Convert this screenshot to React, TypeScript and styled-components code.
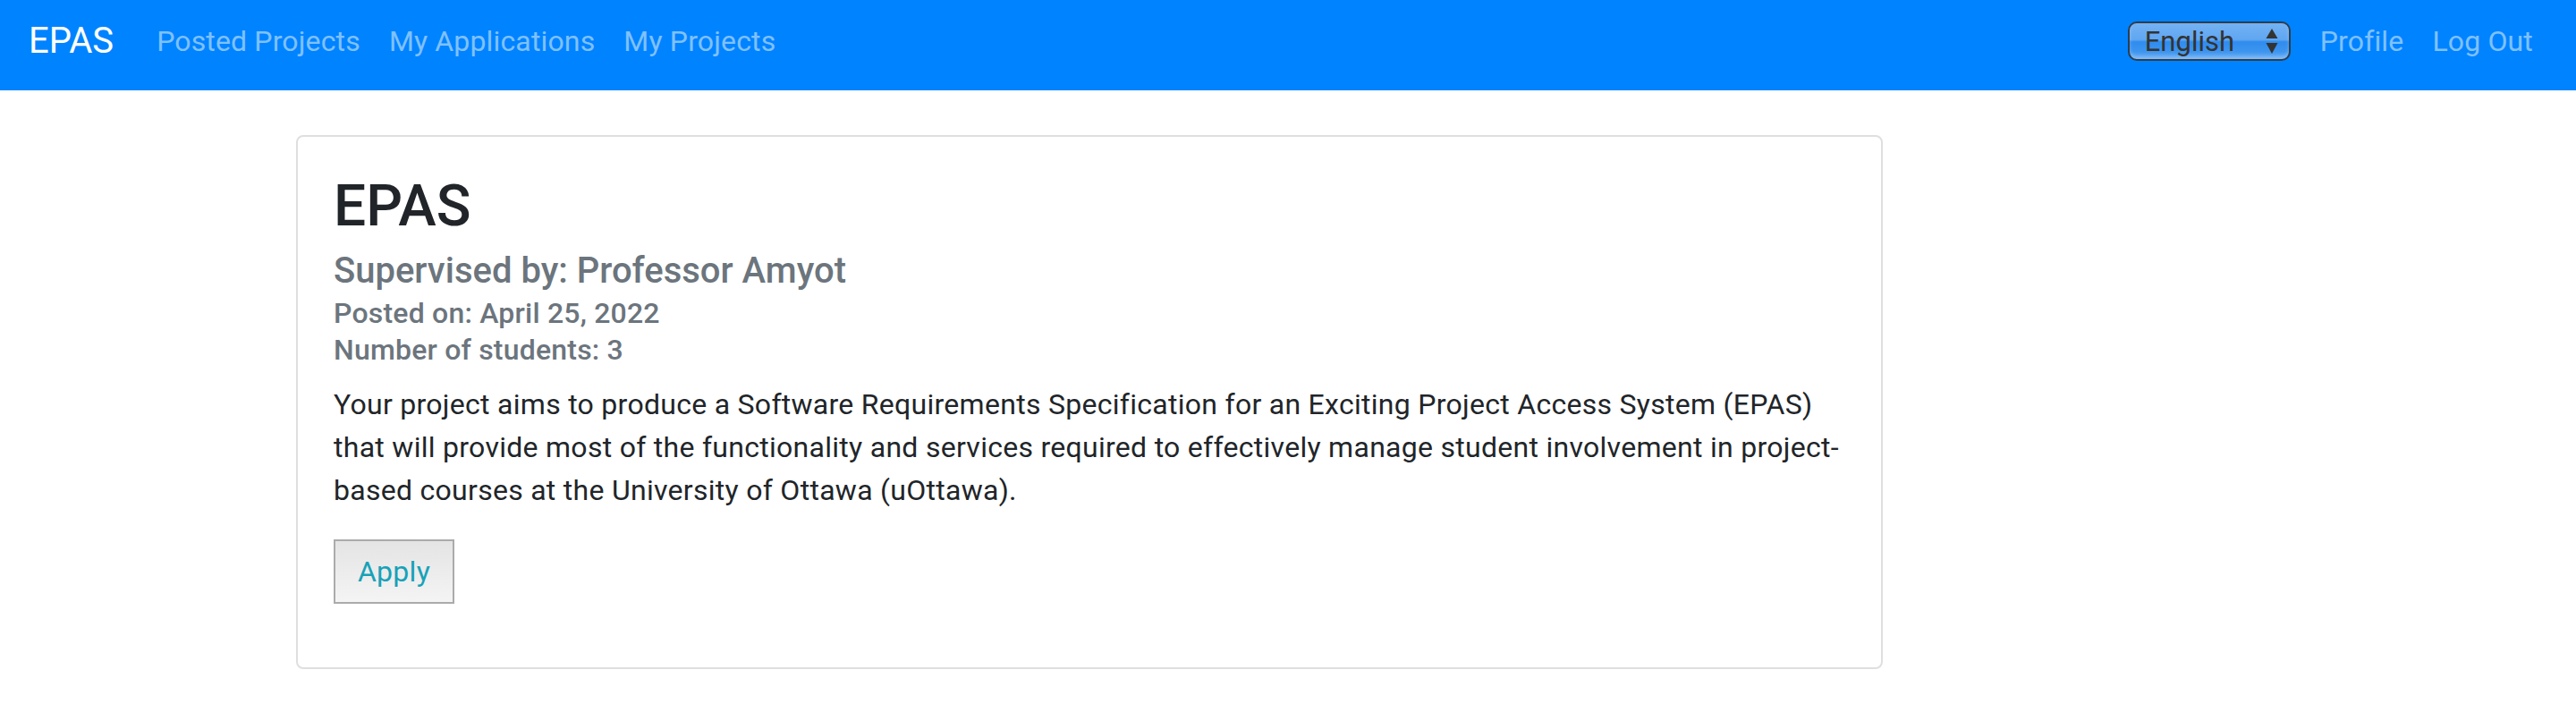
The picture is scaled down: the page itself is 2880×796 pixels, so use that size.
import React from 'react';
import styled, { createGlobalStyle } from 'styled-components';

const Global = createGlobalStyle`
  html, body { margin: 0; padding: 0; background: #fff; }
  body {
    font-family: Roboto, "Liberation Sans", Arial, sans-serif;
    color: #212529;
  }
  * { box-sizing: border-box; }
`;

const Navbar = styled.nav`
  height: 101px;
  background: #0083ff;
  display: flex;
  align-items: center;
  padding: 0 32px 9px 32px;
`;

const Brand = styled.a`
  font-size: 40px;
  line-height: 60px;
  color: #fff;
  text-decoration: none;
  margin-right: 32px;
`;

const NavGroup = styled.div<{ $right?: boolean }>`
  display: flex;
  align-items: center;
  margin-left: ${(p) => (p.$right ? 'auto' : '0')};
`;

const NavLink = styled.a`
  font-size: 32px;
  line-height: 48px;
  letter-spacing: 0.15px;
  padding: 0 16px;
  color: rgba(255, 255, 255, 0.5);
  text-decoration: none;
  white-space: nowrap;
`;

const SelectWrap = styled.div`
  position: relative;
  width: 182px;
  height: 44px;
  margin-right: 17px;
`;

const LangSelect = styled.select`
  appearance: none;
  -webkit-appearance: none;
  width: 100%;
  height: 100%;
  border: 2px solid #2f3d4d;
  border-radius: 10px;
  padding: 0 40px 0 17px;
  font-family: Roboto, "Liberation Sans", Arial, sans-serif;
  font-size: 31px;
  color: #333;
  background: linear-gradient(
    to bottom,
    #74b2f3 0%,
    #5fa6f1 46%,
    #2f8cee 52%,
    #3c94ef 78%,
    #63aaf3 100%
  );
  box-shadow: inset 0 -3px 4px rgba(255, 255, 255, 0.25);
  outline: none;
`;

const Arrows = styled.svg`
  position: absolute;
  left: 153px;
  top: 7px;
  pointer-events: none;
`;

const Main = styled.main`
  padding: 50px 0 40px 331px;
`;

const Card = styled.section`
  width: 1774px;
  border: 2px solid #dfdfdf;
  border-radius: 8px;
  padding: 40px 40px 71px 40px;
  background: #fff;
`;

const Title = styled.h2`
  margin: 0 0 9px 0;
  font-size: 64px;
  line-height: 76.8px;
  font-weight: 500;
  color: #212529;
`;

const Subtitle = styled.h5`
  margin: 0 0 3px 0;
  font-size: 40px;
  line-height: 48px;
  font-weight: 500;
  color: #6c757d;
`;

const Meta = styled.h6`
  margin: 0;
  font-size: 32px;
  line-height: 41.6px;
  letter-spacing: 0.2px;
  font-weight: 500;
  color: #6c757d;
`;

const Description = styled.p`
  margin: 15px 0 31px 0;
  font-size: 32px;
  line-height: 48px;
  letter-spacing: 0.28px;
  font-weight: 400;
  color: #212529;
`;

const DescLine = styled.span`
  display: block;
  white-space: nowrap;
`;

const ApplyButton = styled.button`
  display: flex;
  align-items: center;
  justify-content: center;
  width: 135px;
  height: 72px;
  padding: 0;
  border: 2px solid #ababab;
  border-radius: 0;
  background: linear-gradient(to bottom, #e4e4e4, #f4f4f4);
  color: #17a2b8;
  font-family: Roboto, "Liberation Sans", Arial, sans-serif;
  font-size: 32px;
  line-height: 48px;
  letter-spacing: 0.3px;
`;

export default function App() {
  return (
    <>
      <Global />
      <Navbar>
        <Brand href="#">EPAS</Brand>
        <NavGroup>
          <NavLink href="#">Posted Projects</NavLink>
          <NavLink href="#">My Applications</NavLink>
          <NavLink href="#">My Projects</NavLink>
        </NavGroup>
        <NavGroup $right>
          <SelectWrap>
            <LangSelect defaultValue="en">
              <option value="en">English</option>
              <option value="fr">Français</option>
            </LangSelect>
            <Arrows width="16" height="30" viewBox="0 0 16 30">
              <polygon points="8,1 14.5,12 1.5,12" fill="#333" />
              <polygon points="1.5,17 14.5,17 8,29" fill="#333" />
            </Arrows>
          </SelectWrap>
          <NavLink href="#">Profile</NavLink>
          <NavLink href="#">Log Out</NavLink>
        </NavGroup>
      </Navbar>
      <Main>
        <Card>
          <Title>EPAS</Title>
          <Subtitle>Supervised by: Professor Amyot</Subtitle>
          <Meta>Posted on: April 25, 2022</Meta>
          <Meta>Number of students: 3</Meta>
          <Description>
            <DescLine>
              Your project aims to produce a Software Requirements Specification for an Exciting Project Access
              System (EPAS)
            </DescLine>
            <DescLine>
              that will provide most of the functionality and services required to effectively manage student
              involvement in project-
            </DescLine>
            <DescLine>based courses at the University of Ottawa (uOttawa).</DescLine>
          </Description>
          <ApplyButton>Apply</ApplyButton>
        </Card>
      </Main>
    </>
  );
}
